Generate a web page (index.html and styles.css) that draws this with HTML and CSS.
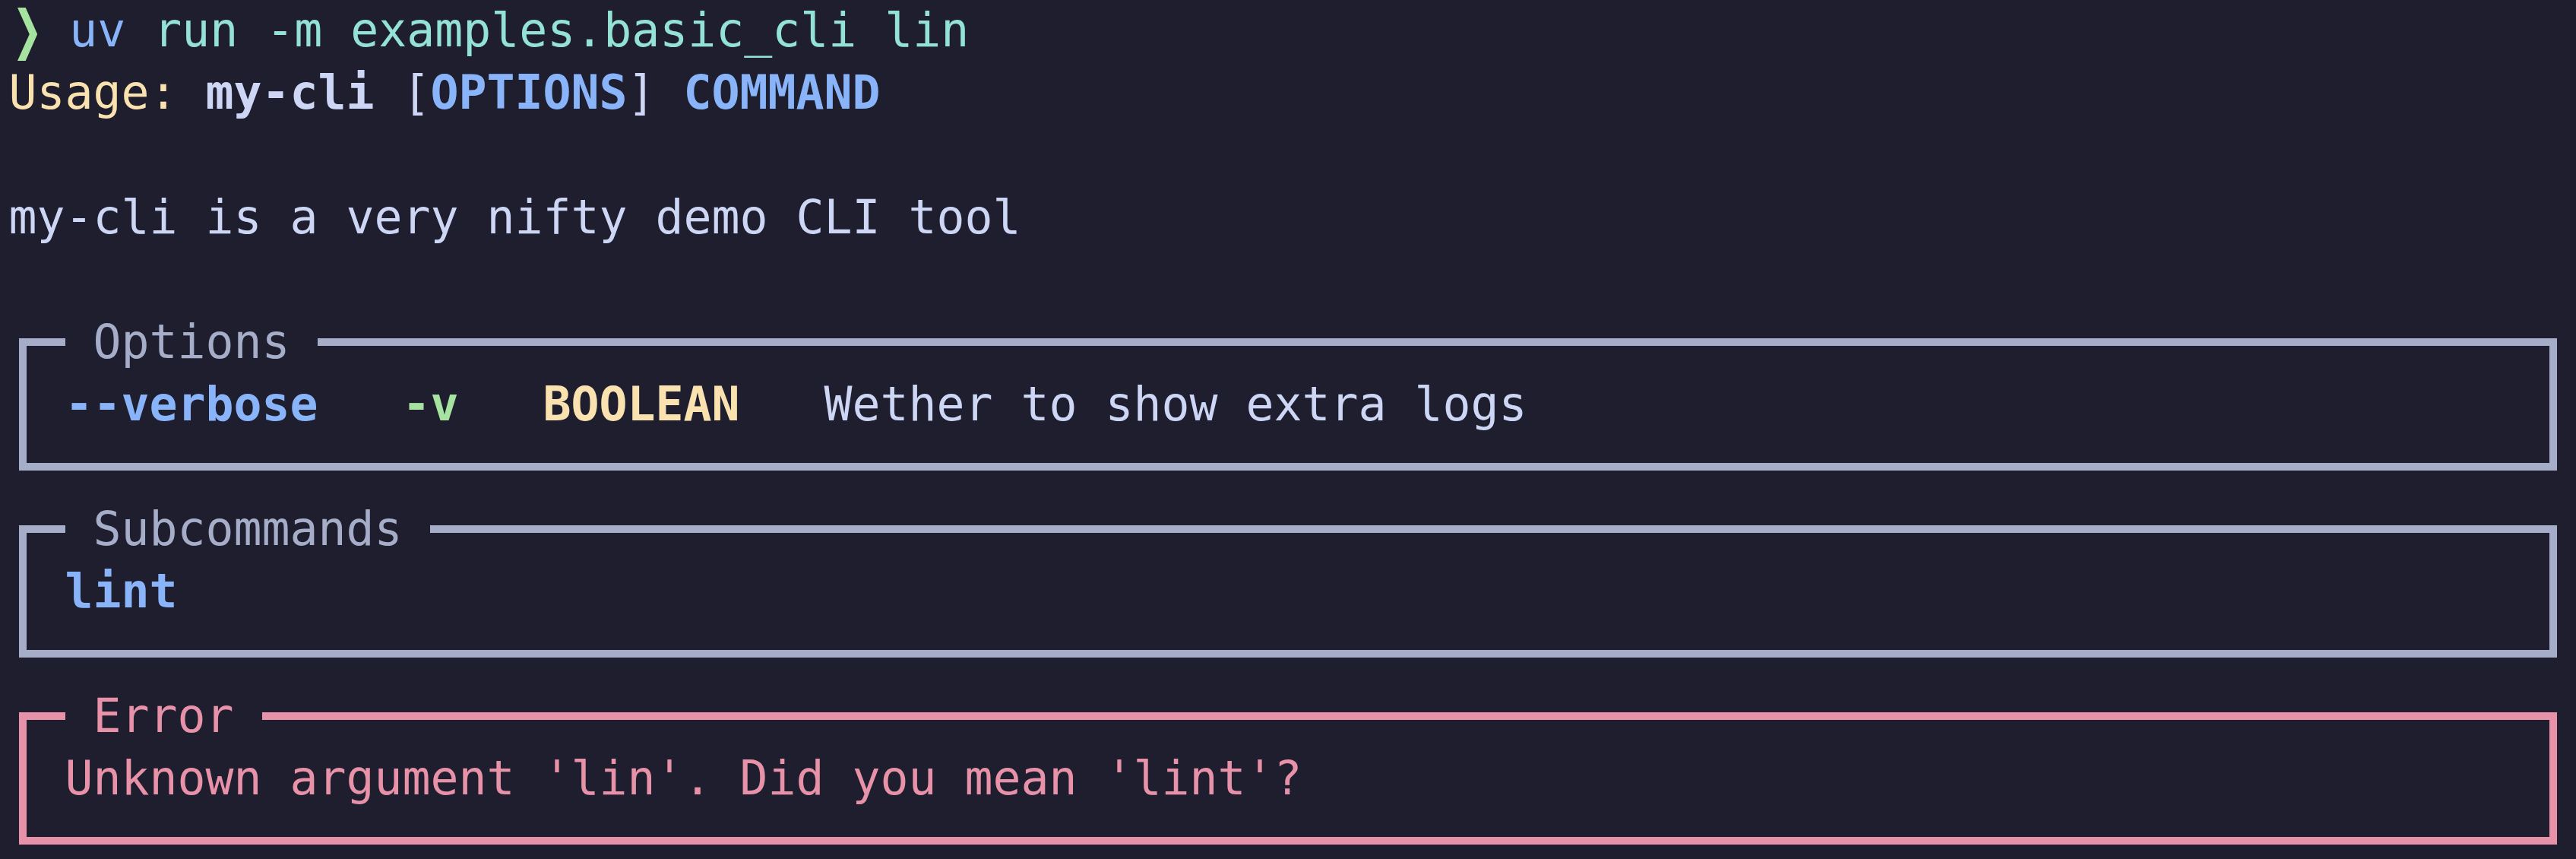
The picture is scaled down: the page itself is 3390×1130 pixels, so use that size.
FILE: index.html
```html
<!DOCTYPE html>
<html lang="en">
<head>
<meta charset="utf-8">
<title>my-cli</title>
<link rel="stylesheet" href="styles.css">
</head>
<body>
<main class="term">
  <div class="line"><span class="prompt">❯</span> <span class="c-blue">uv</span><span class="c-teal"> run -m examples.basic_cli lin</span></div>
  <div class="line"><span class="c-yellow">Usage:</span> <b class="c-fg">my-cli</b> [<b class="c-blue">OPTIONS</b>] <b class="c-blue">COMMAND</b></div>
  <div class="line"> </div>
  <div class="line">my-cli is a very nifty demo CLI tool</div>
  <div class="line"> </div>

  <fieldset class="panel">
    <legend class="panel-title"> Options </legend>
    <div class="line"><b class="c-blue">--verbose</b>   <b class="c-green">-v</b>   <b class="c-yellow">BOOLEAN</b>   Wether to show extra logs</div>
  </fieldset>

  <fieldset class="panel">
    <legend class="panel-title"> Subcommands </legend>
    <div class="line"><b class="c-blue">lint</b></div>
  </fieldset>

  <fieldset class="panel panel-error">
    <legend class="panel-title"> Error </legend>
    <div class="line">Unknown argument 'lin'. Did you mean 'lint'?</div>
  </fieldset>
</main>
</body>
</html>
```

FILE: styles.css
```css
html, body {
  margin: 0;
  padding: 0;
  background: #1e1e2e;
}

body {
  width: 3390px;
  height: 1130px;
  overflow: hidden;
}

.term {
  margin-top: -1px;
  padding: 0 11.5px;
  font-family: "DejaVu Sans Mono", "Liberation Mono", monospace;
  font-size: 61.46px;
  line-height: 82px;
  color: #cdd6f4;
}

.line {
  height: 82px;
  white-space: pre;
}

b {
  font-weight: bold;
}

.prompt {
  display: inline-block;
  width: 1ch;
  color: #a6e3a1;
  font-family: "DejaVu Sans", sans-serif;
  font-weight: bold;
  text-align: center;
  transform: scale(0.78, 1.14);
  transform-origin: 40% 62%;
}

.c-blue { color: #89b4fa; }
.c-teal { color: #94e2d5; }
.c-yellow { color: #f9e2af; }
.c-green { color: #a6e3a1; }
.c-fg { color: #cdd6f4; }

.panel {
  margin: 0 13.5px 36px;
  padding: 0 0 36px 50.5px;
  border: 10px solid #a6adc8;
  min-width: 0;
}

.panel-title {
  padding: 0;
  margin: 0;
  white-space: pre;
  color: #a6adc8;
}

.panel-error {
  border-color: #e892a9;
  color: #e892a9;
}

.panel-error .panel-title {
  color: #e892a9;
}
```
